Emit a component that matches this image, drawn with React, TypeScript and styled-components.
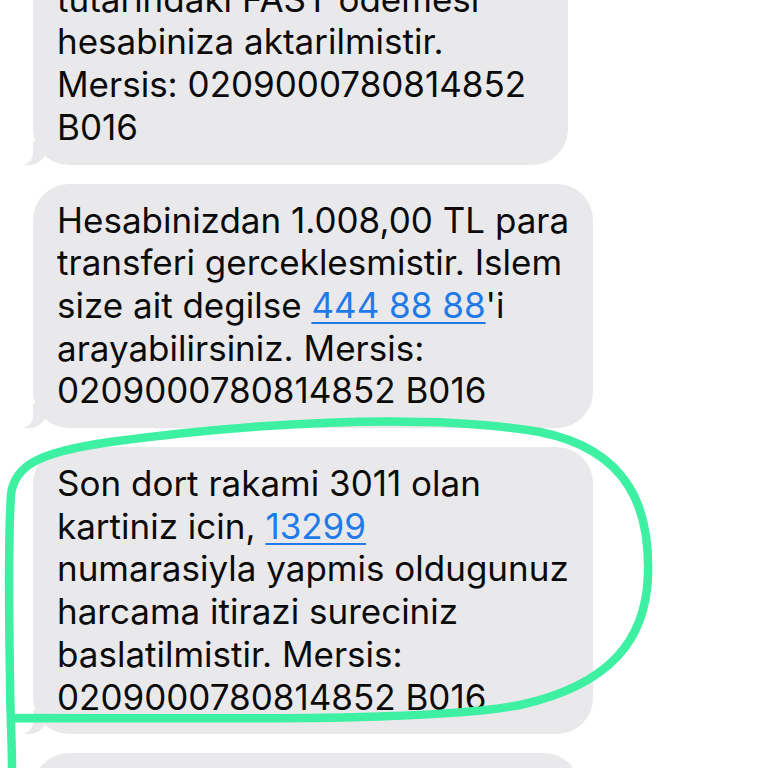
import React from "react";
import styled, { createGlobalStyle } from "styled-components";

const Global = createGlobalStyle`
  html, body { margin: 0; padding: 0; background: #ffffff; }
  body { width: 768px; height: 768px; overflow: hidden; }
  #root { width: 768px; height: 768px; overflow: hidden; position: relative; }
`;

const Thread = styled.div`
  display: flex;
  flex-direction: column;
  align-items: flex-start;
  gap: 19px;
  padding-left: 33px;
  margin-top: -80px;
`;

const Bubble = styled.div<{ $w: number; $tail?: boolean }>`
  position: relative;
  box-sizing: border-box;
  width: ${(p) => p.$w}px;
  background: #e9e9eb;
  border-radius: 36px;
  padding: 15px 20px 16px 24px;
  font-family: Inter, "Liberation Sans", Arial, sans-serif;
  font-size: 35px;
  line-height: 42.7px;
  color: #0b0b0b;
  letter-spacing: 0;
  ${(p) =>
    p.$tail
      ? `
  &::before {
    content: "";
    position: absolute;
    left: -10px;
    bottom: 0;
    width: 24px;
    height: 24px;
    background: #e9e9eb;
    border-bottom-right-radius: 18px;
    z-index: 0;
  }
  &::after {
    content: "";
    position: absolute;
    left: -14px;
    bottom: 0;
    width: 14px;
    height: 24px;
    background: #ffffff;
    border-bottom-right-radius: 12px;
    z-index: 1;
  }`
      : ""}
`;

const Line = styled.div`
  position: relative;
  z-index: 2;
  white-space: nowrap;
`;

const Link = styled.span`
  color: #1e7be9;
  text-decoration: underline;
  text-decoration-thickness: 2px;
  text-underline-offset: 4px;
`;

const Overlay = styled.svg`
  position: absolute;
  left: 0;
  top: 0;
  width: 768px;
  height: 768px;
  pointer-events: none;
  z-index: 5;
`;

export default function App() {
  return (
    <>
      <Global />
      <Thread>
        <Bubble $w={535} $tail>
          <Line>bildirimi ile 1.000,00 TL</Line>
          <Line>tutarindaki FAST odemesi</Line>
          <Line>hesabiniza aktarilmistir.</Line>
          <Line>Mersis: 0209000780814852</Line>
          <Line>B016</Line>
        </Bubble>
        <Bubble $w={560} $tail>
          <Line>Hesabinizdan 1.008,00 TL para</Line>
          <Line>transferi gerceklesmistir. Islem</Line>
          <Line>
            size ait degilse <Link>444 88 88</Link>'i
          </Line>
          <Line>arayabilirsiniz. Mersis:</Line>
          <Line>0209000780814852 B016</Line>
        </Bubble>
        <Bubble $w={560} $tail>
          <Line>Son dort rakami 3011 olan</Line>
          <Line>
            kartiniz icin, <Link>13299</Link>
          </Line>
          <Line>numarasiyla yapmis oldugunuz</Line>
          <Line>harcama itirazi sureciniz</Line>
          <Line>baslatilmistir. Mersis:</Line>
          <Line>0209000780814852 B016</Line>
        </Bubble>
        <Bubble $w={547}>
          <Line>Son dort rakami 3011 olan</Line>
        </Bubble>
      </Thread>
      <Overlay viewBox="0 0 768 768">
        <path
          d="M 12 770 C 12 740, 10 710, 10 680 C 9 620, 8 540, 11 495 C 14 465, 40 452, 110 442 C 240 424, 420 412, 540 432 C 630 450, 650 510, 648 575 C 646 640, 610 685, 520 705 C 430 722, 220 718, 15 718"
          fill="none"
          stroke="#3ef0a2"
          strokeWidth="8.5"
          strokeLinecap="round"
          strokeLinejoin="round"
        />
      </Overlay>
    </>
  );
}
